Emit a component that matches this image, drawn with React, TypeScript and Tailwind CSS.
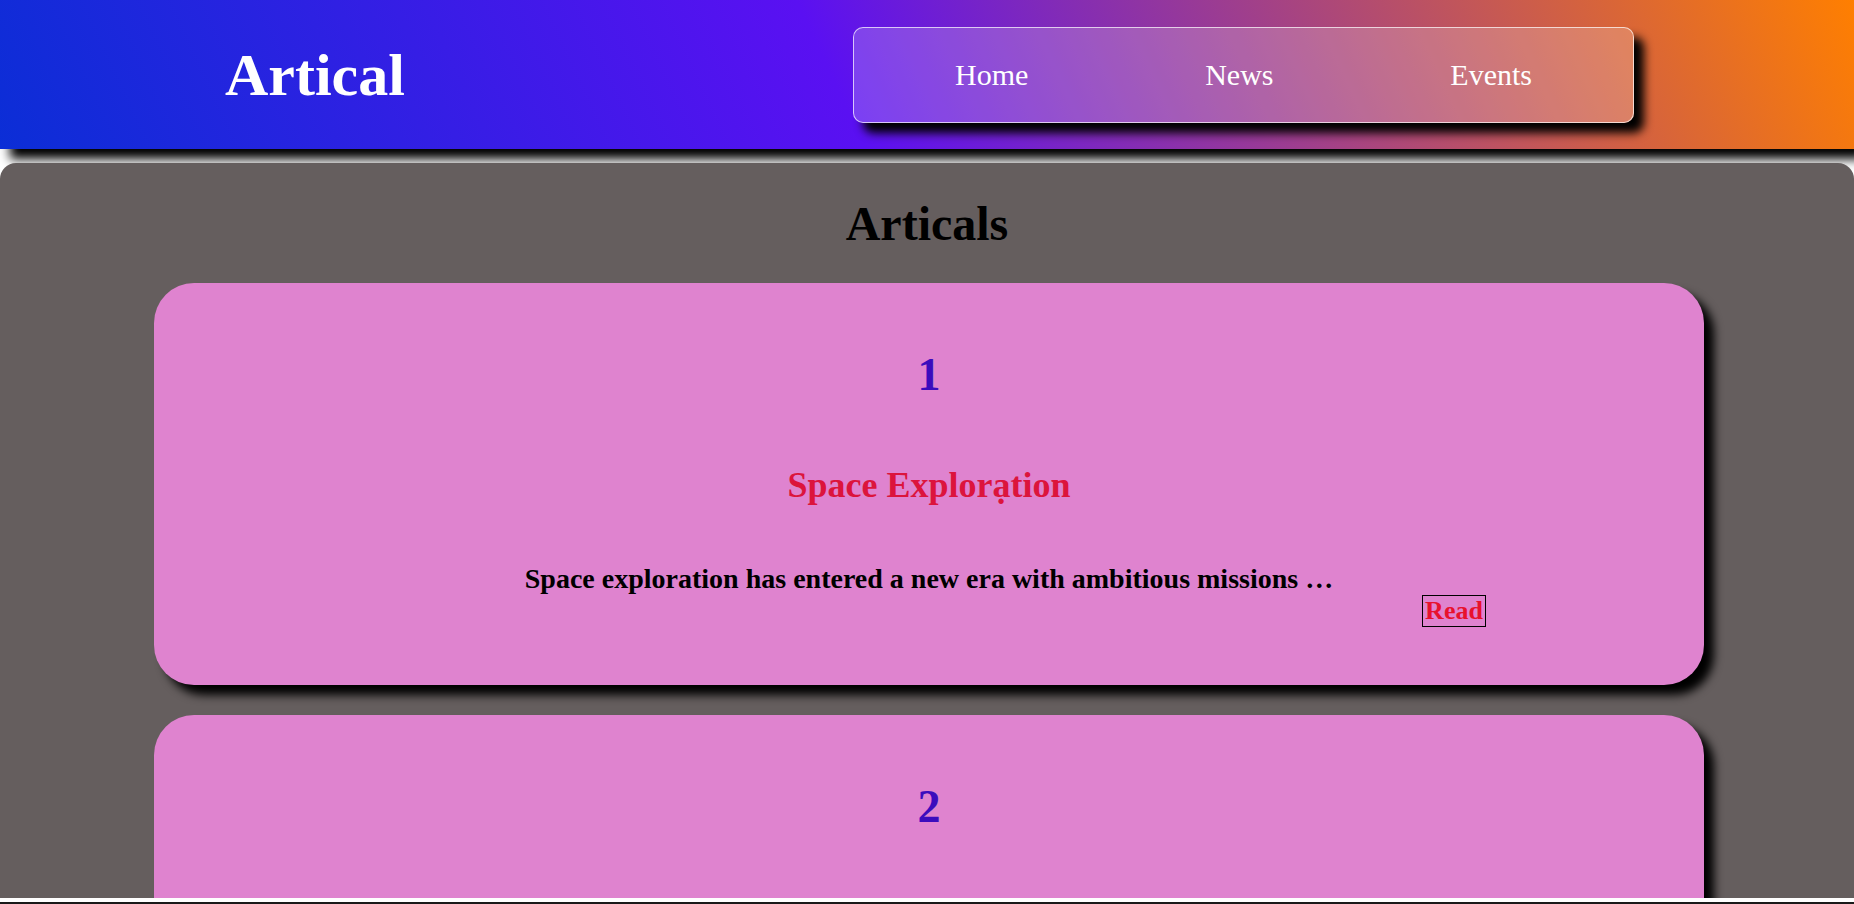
import React from 'react';

interface Article {
  id: number;
  title: string;
  summary: string;
}

const articles: Article[] = [
  {
    id: 1,
    title: 'Explor\u1EA1tion',
    summary: 'Space exploration has entered a new era with ambitious missions \u2026',
  },
  {
    id: 2,
    title: 'Explor\u1EA1tion',
    summary: 'Space exploration has entered a new era with ambitious missions \u2026',
  },
];

const navLinks = ['Home', 'News', 'Events'];

function ArticleCard({ article }: { article: Article }) {
  return (
    <div className="ml-[154px] w-[1550px] rounded-[40px] bg-[#df83cf] pt-[69px] pb-[58px] shadow-[10px_10px_10px_black]">
      <h2 className="text-center text-[46px] leading-none font-bold text-[#3b0cbd]">{article.id}</h2>
      <h3 className="mt-[69px] text-center text-[36px] leading-none font-bold text-[#dc143c]">
        Space {article.title}
      </h3>
      <p className="mt-[62px] text-center text-[28px] leading-none font-bold text-black">{article.summary}</p>
      <div className="mt-[2px] flex justify-end pr-[218px]">
        <button className="flex h-[32px] w-[64px] items-center justify-center border border-black text-[26px] leading-none font-bold text-[#e8112d]">
          Read
        </button>
      </div>
    </div>
  );
}

export default function App() {
  return (
    <div className="min-h-screen bg-white font-['Liberation_Serif','Times_New_Roman',serif]">
      <header className="flex h-[149px] items-center bg-[linear-gradient(65deg,#0b2ed6_0%,#5a10f2_45%,#ff7f00_100%)] shadow-[10px_10px_10px_black]">
        <div className="ml-[225px] text-[60px] leading-none font-bold text-white">Artical</div>
        <nav className="mr-[220px] ml-auto flex h-[96px] w-[781px] items-center justify-between rounded-[10px] border border-white/70 bg-white/20 px-[101px] shadow-[10px_10px_10px_black]">
          {navLinks.map((link) => (
            <a key={link} href="#" className="text-[30px] leading-none text-white">
              {link}
            </a>
          ))}
        </nav>
      </header>

      <main className="mt-[14px] h-[735px] overflow-hidden rounded-t-[16px] bg-[#655e5e] pt-[37px]">
        <h1 className="text-center text-[48px] leading-none font-bold text-black">Articals</h1>
        <div className="mt-[35px] flex flex-col gap-[30px]">
          {articles.map((a) => (
            <ArticleCard key={a.id} article={a} />
          ))}
        </div>
      </main>
      <div className="mt-[4px] h-[2px] bg-[#1a1a1a]" />
    </div>
  );
}
